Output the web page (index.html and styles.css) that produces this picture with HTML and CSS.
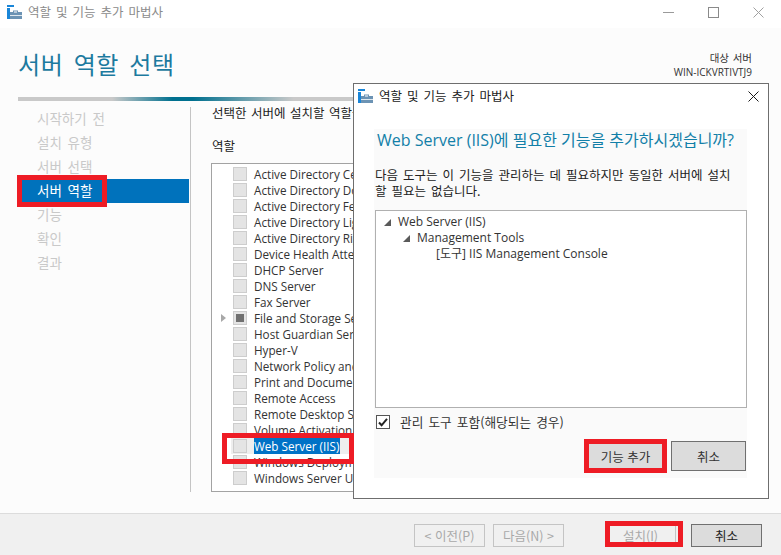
FILE: index.html
```html
<!DOCTYPE html>
<html lang="ko">
<head>
<meta charset="utf-8">
<title>역할 및 기능 추가 마법사</title>
<link rel="stylesheet" href="styles.css">
</head>
<body>
<div class="window">
  <header class="titlebar">
    <svg class="appicon" viewBox="0 0 15 14" width="15" height="14"><rect x="0" y="0" width="7" height="2" fill="#1a86d8"/><rect x="0" y="3" width="3" height="11" fill="#1a86d8"/><path d="M3 14V7h3V5.5h5V7h4v7z" fill="#6c93b4"/><rect x="7" y="6.5" width="3" height="1" fill="#fff"/><rect x="3" y="10" width="12" height="1" fill="#dfe8ef"/></svg>
    <span class="titlebar-text">역할 및 기능 추가 마법사</span>
    <div class="winctl">
      <svg width="11" height="11" viewBox="0 0 11 11"><path d="M0 5.5h11" stroke="#9a9a9a" fill="none"/></svg>
      <svg width="11" height="11" viewBox="0 0 11 11"><rect x=".5" y=".5" width="10" height="10" stroke="#8a8a8a" fill="none"/></svg>
      <svg width="11" height="11" viewBox="0 0 11 11"><path d="M.5.5l10 10M10.5.5l-10 10" stroke="#a0a0a0" fill="none"/></svg>
    </div>
  </header>

  <main class="content">
    <div class="pagehead">
      <h1>서버 역할 선택</h1>
      <div class="target"><div class="target-label">대상 서버</div><div>WIN-ICKVRTIVTJ9</div></div>
    </div>
    <div class="progress"></div>
    <div class="columns">
      <nav class="steps">
        <div class="step">시작하기 전</div>
        <div class="step">설치 유형</div>
        <div class="step">서버 선택</div>
        <div class="step active">서버 역할</div>
        <div class="step">기능</div>
        <div class="step">확인</div>
        <div class="step">결과</div>
      </nav>
      <section class="rolespane">
        <p class="intro">선택한 서버에 설치할 역할을 하나 이상 선택하십시오.</p>
        <div class="rolelabel">역할</div>
        <div class="roles">
          <div class="role"><i class="box"></i><span>Active Directory Certificate Services</span></div>
          <div class="role"><i class="box"></i><span>Active Directory Domain Services</span></div>
          <div class="role"><i class="box"></i><span>Active Directory Federation Services</span></div>
          <div class="role"><i class="box"></i><span>Active Directory Lightweight Services</span></div>
          <div class="role"><i class="box"></i><span>Active Directory Rights Services</span></div>
          <div class="role"><i class="box"></i><span>Device Health Attestation</span></div>
          <div class="role"><i class="box"></i><span>DHCP Server</span></div>
          <div class="role"><i class="box"></i><span>DNS Server</span></div>
          <div class="role"><i class="box"></i><span>Fax Server</span></div>
          <div class="role expandable"><i class="box partial"></i><span>File and Storage Services</span></div>
          <div class="role"><i class="box"></i><span>Host Guardian Service</span></div>
          <div class="role"><i class="box"></i><span>Hyper-V</span></div>
          <div class="role"><i class="box"></i><span>Network Policy and Access</span></div>
          <div class="role"><i class="box"></i><span>Print and Document Services</span></div>
          <div class="role"><i class="box"></i><span>Remote Access</span></div>
          <div class="role"><i class="box"></i><span>Remote Desktop Services</span></div>
          <div class="role"><i class="box"></i><span>Volume Activation Services</span></div>
          <div class="role selected"><i class="box"></i><span>Web Server (IIS)</span></div>
          <div class="role"><i class="box"></i><span>Windows Deployment Services</span></div>
          <div class="role"><i class="box"></i><span>Windows Server Update Services</span></div>
        </div>
      </section>
    </div>
  </main>

  <footer class="footer">
    <button class="btn" disabled>&lt; 이전(P)</button>
    <button class="btn" disabled>다음(N) &gt;</button>
    <button class="btn install" disabled>설치(I)</button>
    <button class="btn primary">취소</button>
  </footer>
</div>

<div class="dialog">
  <div class="dlg-title">
    <svg class="appicon" viewBox="0 0 15 14" width="15" height="14"><rect x="0" y="0" width="7" height="2" fill="#1a86d8"/><rect x="0" y="3" width="3" height="11" fill="#1a86d8"/><path d="M3 14V7h3V5.5h5V7h4v7z" fill="#6c93b4"/><rect x="7" y="6.5" width="3" height="1" fill="#fff"/><rect x="3" y="10" width="12" height="1" fill="#dfe8ef"/></svg>
    <span>역할 및 기능 추가 마법사</span>
    <svg class="dlg-close" width="11" height="11" viewBox="0 0 11 11"><path d="M.5.5l10 10M10.5.5l-10 10" stroke="#1a1a1a" fill="none"/></svg>
  </div>
  <div class="dlg-panel">
    <h2>Web Server (IIS)에 필요한 기능을 추가하시겠습니까?</h2>
    <p class="dlg-desc">다음 도구는 이 기능을 관리하는 데 필요하지만 동일한 서버에 설치<br>할 필요는 없습니다.</p>
    <div class="tree">
      <div class="node lvl0"><i class="tri"></i>Web Server (IIS)</div>
      <div class="node lvl1"><i class="tri"></i>Management Tools</div>
      <div class="node lvl2">[도구] IIS Management Console</div>
    </div>
    <label class="include"><svg width="14" height="14" viewBox="0 0 14 14"><rect x=".5" y=".5" width="13" height="13" fill="#fff" stroke="#555"/><path d="M3 7.5l2.6 2.8L11 3.8" stroke="#222" stroke-width="2" fill="none"/></svg><span class="include-text">관리 도구 포함(해당되는 경우)</span></label>
    <div class="dlg-actions">
      <button class="btn dlg-btn">기능 추가</button>
      <button class="btn dlg-btn">취소</button>
    </div>
  </div>
</div>

<div class="mark mark-step"></div>
<div class="mark mark-role"></div>
<div class="mark mark-add"></div>
<div class="mark mark-install"></div>
</body>
</html>
```

FILE: styles.css
```css
* { box-sizing: border-box; }
html, body { margin: 0; height: 100%; overflow: hidden; }
body {
  font-family: "Open Sans", "Noto Sans CJK KR", sans-serif;
  font-size: 12px;
  color: #222;
  background: #fcfcfc;
}
.window { display: flex; flex-direction: column; height: 555px; }

.titlebar {
  height: 28px; flex: none; background: #fff;
  display: flex; align-items: center; padding: 0 17px 4px 7px;
}
.titlebar-text { margin: -2px 0 0 6px; color: #8b8b8b; font-family: "Noto Sans CJK KR", sans-serif; font-size: 12.5px; word-spacing: 1.5px; }
.winctl { margin-left: auto; display: flex; gap: 34px; }
.appicon { flex: none; }

.content { flex: 1; min-height: 0; display: flex; flex-direction: column; padding: 0 0 21px 18px; }
.pagehead { height: 69px; flex: none; display: flex; justify-content: space-between; padding-right: 29px; }
h1 {
  margin: 16px 0 0 0; font: 400 24px/40px "Noto Sans CJK KR", sans-serif;
  color: #1c7a9f; letter-spacing: .6px; word-spacing: 3px;
}
.target { margin-top: 23px; text-align: right; font: 400 10px/14px "Open Sans", "Noto Sans CJK KR", sans-serif; color: #333; }
.target-label { font-size: 10.5px; word-spacing: 1px; }
.progress {
  flex: none; height: 4px; width: 336px;
  background: linear-gradient(90deg, #c9c9c9 0%, #c9c9c9 28%, #00708f 46%, #00708f 52%, #c9c9c9 82%, #c9c9c9 100%);
}
.columns { flex: 1; min-height: 0; display: flex; margin-top: 6px; }
.steps { width: 173px; flex: none; border-right: 1px solid #c4c4c4; margin-right: 20px; padding-right: 1px; }
.step {
  height: 24px; padding-left: 19px; line-height: 22px;
  font-family: "Noto Sans CJK KR", sans-serif; font-size: 13.5px; color: #c9c9c9; word-spacing: 2px;
}
.step.active { background: #0072bc; color: #fff; }
.rolespane { flex: 1; min-width: 0; margin-right: 29px; display: flex; flex-direction: column; }
.intro { margin: 0 0 0 1px; height: 14px; line-height: 12px; font-family: "Noto Sans CJK KR", sans-serif; font-size: 12.5px; white-space: nowrap; word-spacing: 1px; }
.rolelabel { margin: 17px 0 0 1px; height: 20px; line-height: 16px; font-family: "Noto Sans CJK KR", sans-serif; font-size: 12.5px; }
.roles { flex: 1; min-height: 0; margin-top: 5px; border: 1px solid #a3a3a3; background: #fff; padding-top: 2px; overflow: hidden; }
.role { height: 16px; display: flex; align-items: center; padding-left: 21px; position: relative; white-space: nowrap; line-height: 16px; color: #333; font-size: 11.7px; }
.role span { margin-left: 7px; padding: 0 1px 0 0; }
.box { display: block; width: 14px; height: 14px; flex: none; background: #e4e4e4; border: 1px solid #cdcdcd; position: relative; }
.box.partial::after { content: ""; position: absolute; left: 2px; top: 2px; width: 8px; height: 8px; background: #707070; }
.expandable::before {
  content: ""; position: absolute; left: 9px; top: 4px;
  border-left: 5px solid #a8a8a8; border-top: 4px solid transparent; border-bottom: 4px solid transparent;
}
.role.selected { background: linear-gradient(90deg, transparent 19px, #eeeeee 19px); }
.role.selected span { background: #0072c6; color: #fff; }

.footer {
  flex: none; height: 42px; background: #f0f0f0; border-top: 1px solid #dcdcdc;
  display: flex; align-items: flex-start; padding: 10px 19px 0 414px; gap: 8px;
}
.btn {
  width: 75px; height: 23px; padding: 0; border: 1px solid #adadad; background: #e1e1e1;
  font-family: "Noto Sans CJK KR", "Open Sans", sans-serif; font-size: 12.5px; color: #222;
}
.btn[disabled] { background: #f0f0f0; border-color: #c4c4c4; color: #a8a8a8; }
.btn.install { margin-left: 33px; border-color: #c4c4c4; }
.btn.primary { margin-left: 7px; border-color: #707070; background: #dcdcdc; }

.dialog {
  position: absolute; left: 353px; top: 83px; width: 416px; height: 416px;
  background: #fff; border: 1px solid #6e6e6e;
}
.dlg-title { height: 45px; padding: 5px 9px 0 4px; display: flex; align-items: flex-start; font-family: "Noto Sans CJK KR", sans-serif; font-size: 12.5px; color: #222; }
.dlg-title span { margin: -1px 0 0 6px; line-height: 15px; word-spacing: 1.5px; }
.dlg-close { margin-left: auto; margin-top: 2px; }
.dlg-panel { margin: 0 21px 0 20px; width: 373px; height: 349px; background: #fafafa; display: flex; flex-direction: column; }
h2 { margin: 0 0 0 3px; height: 26px; font: 400 16px/22px "Open Sans", "Noto Sans CJK KR", sans-serif; color: #127fa8; white-space: nowrap; }
.dlg-desc { margin: 12px 0 0 1px; font-family: "Noto Sans CJK KR", sans-serif; font-size: 12.5px; line-height: 16px; color: #222; word-spacing: 1.5px; white-space: nowrap; }
.tree { margin: 11px 0 0 1px; height: 198px; background: #fff; border: 1px solid #b0b0b0; padding-top: 3px; color: #333; }
.node { height: 16px; line-height: 16px; font-size: 12px; white-space: nowrap; display: flex; align-items: center; }
.lvl0 { padding-left: 8px; }
.lvl1 { padding-left: 27px; }
.lvl2 { padding-left: 60px; }
.tri { width: 0; height: 0; margin-right: 7px; border-left: 7px solid transparent; border-bottom: 7px solid #5a5a5a; display: block; }
.include { margin: 7px 0 0 2px; display: flex; align-items: center; gap: 10px; height: 14px; font-family: "Noto Sans CJK KR", sans-serif; font-size: 12.7px; color: #333; word-spacing: 1.5px; }
.include-text { margin-top: -2px; }
.dlg-actions { margin-top: 12px; display: flex; justify-content: flex-end; gap: 8px; padding-right: 1px; }
.dlg-btn { height: 30px; width: 75px; border-color: #707070; background: #dcdcdc; color: #333; }

.mark { position: absolute; border: 5px solid #ee1c25; pointer-events: none; }
.mark-step { left: 17px; top: 175px; width: 90px; height: 32px; }
.mark-role { left: 222px; top: 433px; width: 132px; height: 31px; }
.mark-add { left: 584px; top: 439px; width: 83px; height: 34px; }
.mark-install { left: 605px; top: 521px; width: 78px; height: 26px; }
```
